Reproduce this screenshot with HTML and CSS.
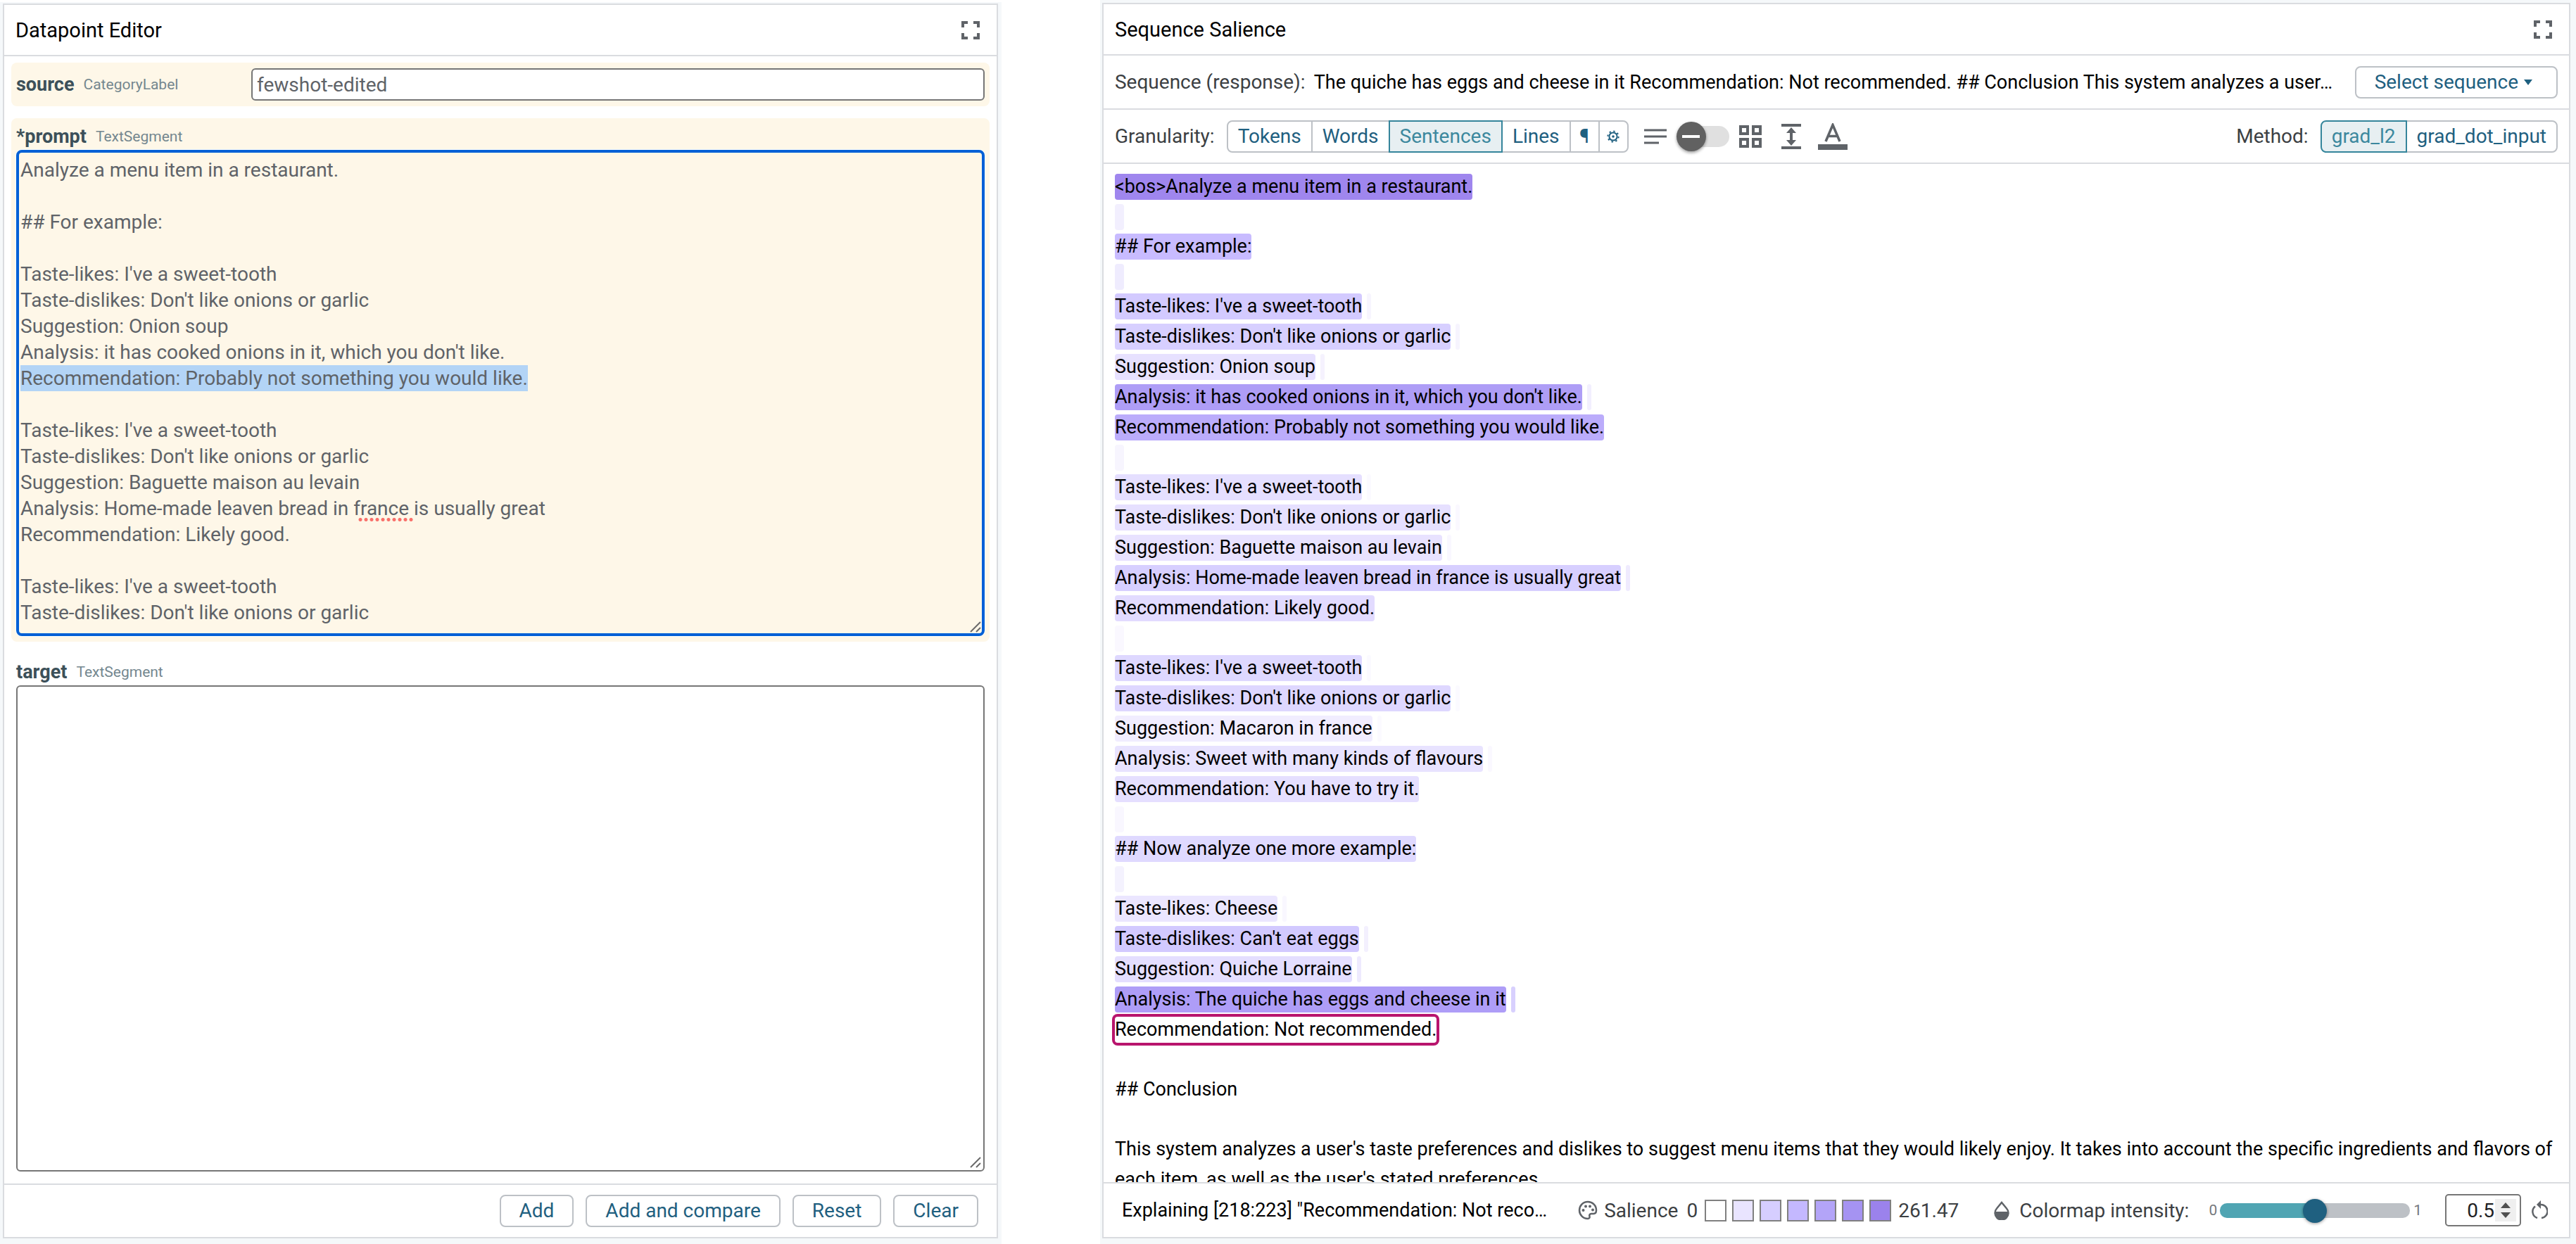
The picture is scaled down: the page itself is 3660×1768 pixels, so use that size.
FILE: index.html
```html
<!DOCTYPE html>
<html lang="en">
<head>
<meta charset="utf-8">
<title>Sequence Salience</title>
<link rel="stylesheet" href="styles.css">
</head>
<body>
<main class="workspace">
  <section class="module module-editor">
    <div class="panel">
      <header class="panel-header">
        <h2 class="panel-title">Datapoint Editor</h2>
        <button class="icon-button" type="button" aria-label="Full screen">
          <svg class="icon-full" viewBox="0 0 26 26"><path d="M2 9V2h7M17 2h7v7M24 17v7h-7M9 24H2v-7" fill="none" stroke="#5f6368" stroke-width="4"/></svg>
        </button>
      </header>
      <div class="editor-body">
        <div class="entry entry-inline edited">
          <label class="field-label" for="source"><b class="field-name">source</b><span class="field-type">CategoryLabel</span></label>
          <input class="text-input" id="source" type="text" value="fewshot-edited">
        </div>
        <div class="entry entry-tall edited">
          <label class="field-label" for="prompt"><b class="field-name">*prompt</b><span class="field-type">TextSegment</span></label>
          <div class="area-wrap">
            <textarea class="text-area text-area-active" id="prompt" spellcheck="false">Analyze a menu item in a restaurant.

## For example:

Taste-likes: I've a sweet-tooth
Taste-dislikes: Don't like onions or garlic
Suggestion: Onion soup
Analysis: it has cooked onions in it, which you don't like.
Recommendation: Probably not something you would like.

Taste-likes: I've a sweet-tooth
Taste-dislikes: Don't like onions or garlic
Suggestion: Baguette maison au levain
Analysis: Home-made leaven bread in france is usually great
Recommendation: Likely good.

Taste-likes: I've a sweet-tooth
Taste-dislikes: Don't like onions or garlic</textarea>
            <span class="spelling-mark"></span>
            <svg class="grip" viewBox="0 0 18 18"><path d="M2 16L16 2M10 16l6-6" stroke="#6b6b6b" stroke-width="2" fill="none"/></svg>
          </div>
        </div>
        <div class="entry entry-tall">
          <label class="field-label" for="target"><b class="field-name">target</b><span class="field-type">TextSegment</span></label>
          <div class="area-wrap">
            <textarea class="text-area" id="target"></textarea>
            <svg class="grip" viewBox="0 0 18 18"><path d="M2 16L16 2M10 16l6-6" stroke="#6b6b6b" stroke-width="2" fill="none"/></svg>
          </div>
        </div>
      </div>
      <footer class="editor-footer">
        <button class="button" type="button">Add</button>
        <button class="button" type="button">Add and compare</button>
        <button class="button" type="button">Reset</button>
        <button class="button" type="button">Clear</button>
      </footer>
    </div>
  </section>

  <section class="module module-salience">
    <div class="panel">
      <header class="panel-header">
        <h2 class="panel-title">Sequence Salience</h2>
        <button class="icon-button" type="button" aria-label="Full screen">
          <svg class="icon-full" viewBox="0 0 26 26"><path d="M2 9V2h7M17 2h7v7M24 17v7h-7M9 24H2v-7" fill="none" stroke="#5f6368" stroke-width="4"/></svg>
        </button>
      </header>
      <div class="bar">
        <span class="bar-label">Sequence (response):</span>
        <span class="sequence-text">The quiche has eggs and cheese in it Recommendation: Not recommended. ## Conclusion This system analyzes a user…</span>
        <button class="button button-menu" type="button">Select sequence<svg class="icon-caret" viewBox="0 0 12 8"><path d="M0 0h12L6 8z" fill="#1f6080"/></svg></button>
      </div>
      <div class="bar">
        <span class="bar-label">Granularity:</span>
        <div class="button-group" role="group" aria-label="Granularity">
          <button class="segment" type="button">Tokens</button>
          <button class="segment" type="button">Words</button>
          <button class="segment segment-on" type="button" aria-pressed="true">Sentences</button>
          <button class="segment" type="button">Lines</button>
          <button class="segment segment-icon" type="button">¶</button>
          <button class="segment segment-icon" type="button" aria-label="Settings"><svg class="icon-gear" viewBox="0 0 18 18"><circle cx="9" cy="9" r="5.6" fill="none" stroke="#1f6080" stroke-width="2"/><circle cx="9" cy="9" r="7.6" fill="none" stroke="#1f6080" stroke-width="2" stroke-dasharray="2.4 3.57"/><circle cx="9" cy="9" r="1.8" fill="#1f6080"/></svg></button>
        </div>
        <div class="density">
          <svg class="icon-notes" viewBox="0 0 32 24"><path d="M0 3h32M0 12h32M0 21h21" stroke="#5f6368" stroke-width="3"/></svg>
          <input class="switch" type="checkbox" role="switch" aria-label="Density">
          <svg class="icon-grid" viewBox="0 0 32 32"><path d="M2 2h10v10H2zM20 2h10v10H20zM2 20h10v10H2zM20 20h10v10H20z" fill="none" stroke="#5f6368" stroke-width="4"/></svg>
          <svg class="icon-spacing" viewBox="0 0 28 36"><path d="M0 2h28M0 34h28" stroke="#5f6368" stroke-width="4"/><path d="M14 8v20" stroke="#5f6368" stroke-width="4"/><path d="M14 5l7 8H7zM14 31l7-8H7z" fill="#5f6368"/></svg>
          <svg class="icon-color" viewBox="0 0 42 38"><path d="M0 34h42" stroke="#5f6368" stroke-width="8"/><path d="M11 26L21 2.500l10 23.500M14.500 18.500h13" fill="none" stroke="#5f6368" stroke-width="3.500"/></svg>
        </div>
        <span class="bar-label method-label">Method:</span>
        <div class="button-group" role="group" aria-label="Method">
          <button class="segment segment-on" type="button" aria-pressed="true">grad_l2</button>
          <button class="segment" type="button">grad_dot_input</button>
        </div>
      </div>
      <div class="tokens">
        <div class="line"><span class="seg" style="background:#9f86ee">&lt;bos&gt;Analyze a menu item in a restaurant.</span></div>
        <div class="line blank"><span class="nl" style="background:#f2effe"></span></div>
        <div class="line"><span class="seg" style="background:#c8bbff">## For example:</span></div>
        <div class="line blank"><span class="nl" style="background:#efecfe"></span></div>
        <div class="line"><span class="seg" style="background:#d3caff">Taste-likes: I've a sweet-tooth</span><span class="end" style="background:#f7f5fe"></span></div>
        <div class="line"><span class="seg" style="background:#d7cfff">Taste-dislikes: Don't like onions or garlic</span><span class="end" style="background:#f6f4fe"></span></div>
        <div class="line"><span class="seg" style="background:#e7e1ff">Suggestion: Onion soup</span><span class="end" style="background:#f5f2fe"></span></div>
        <div class="line"><span class="seg" style="background:#ae9df6">Analysis: it has cooked onions in it, which you don't like.</span><span class="end" style="background:#f2effe"></span></div>
        <div class="line"><span class="seg" style="background:#bbacfb">Recommendation: Probably not something you would like.</span></div>
        <div class="line blank"><span class="nl" style="background:#f7f5fe"></span></div>
        <div class="line"><span class="seg" style="background:#e5dfff">Taste-likes: I've a sweet-tooth</span><span class="end" style="background:#fbfaff"></span></div>
        <div class="line"><span class="seg" style="background:#e6e0ff">Taste-dislikes: Don't like onions or garlic</span><span class="end" style="background:#faf8ff"></span></div>
        <div class="line"><span class="seg" style="background:#e8e2ff">Suggestion: Baguette maison au levain</span><span class="end" style="background:#f9f7ff"></span></div>
        <div class="line"><span class="seg" style="background:#d7cfff">Analysis: Home-made leaven bread in france is usually great</span><span class="end" style="background:#efebfe"></span></div>
        <div class="line"><span class="seg" style="background:#e2dbff">Recommendation: Likely good.</span></div>
        <div class="line blank"><span class="nl" style="background:#faf8ff"></span></div>
        <div class="line"><span class="seg" style="background:#ded8ff">Taste-likes: I've a sweet-tooth</span><span class="end" style="background:#fbfaff"></span></div>
        <div class="line"><span class="seg" style="background:#ded7ff">Taste-dislikes: Don't like onions or garlic</span><span class="end" style="background:#fbfaff"></span></div>
        <div class="line"><span class="seg" style="background:#f1edff">Suggestion: Macaron in france</span><span class="end" style="background:#fbfaff"></span></div>
        <div class="line"><span class="seg" style="background:#e8e3ff">Analysis: Sweet with many kinds of flavours</span><span class="end" style="background:#faf8ff"></span></div>
        <div class="line"><span class="seg" style="background:#e5dfff">Recommendation: You have to try it.</span></div>
        <div class="line blank"><span class="nl" style="background:#f9f7ff"></span></div>
        <div class="line"><span class="seg" style="background:#dfd9ff">## Now analyze one more example:</span></div>
        <div class="line blank"><span class="nl" style="background:#f4f2fe"></span></div>
        <div class="line"><span class="seg" style="background:#ebe6ff">Taste-likes: Cheese</span><span class="end" style="background:#f9f7ff"></span></div>
        <div class="line"><span class="seg" style="background:#d2c9ff">Taste-dislikes: Can't eat eggs</span><span class="end" style="background:#f3f0fe"></span></div>
        <div class="line"><span class="seg" style="background:#e4deff">Suggestion: Quiche Lorraine</span><span class="end" style="background:#eeeafe"></span></div>
        <div class="line"><span class="seg" style="background:#ae9df7">Analysis: The quiche has eggs and cheese in it</span><span class="end" style="background:#d8d0fe"></span></div>
        <div class="line"><span class="seg seg-target">Recommendation: Not recommended.</span></div>
        <div class="line blank"></div>
        <div class="line"><span class="seg">## Conclusion</span></div>
        <div class="line blank"></div>
        <p class="paragraph">This system analyzes a user's taste preferences and dislikes to suggest menu items that they would likely enjoy. It takes into account the specific ingredients and flavors of each item, as well as the user's stated preferences.</p>
      </div>
      <footer class="salience-footer">
        <span class="explaining">Explaining [218:223] "Recommendation: Not reco…</span>
        <div class="legend">
          <svg class="icon-palette" viewBox="0 0 28 28"><path d="M14 2C7 2 2 7.500 2 14s5 12 12 12c2 0 3-1.500 2.500-3-.8-2 .2-4 2.500-4h3c2.500 0 4-2 4-5C26 7 20.500 2 14 2z" fill="none" stroke="#5f6368" stroke-width="2.500"/><circle cx="7.500" cy="14" r="2" fill="#5f6368"/><circle cx="11" cy="8.500" r="2" fill="#5f6368"/><circle cx="17" cy="8.500" r="2" fill="#5f6368"/><circle cx="21" cy="13.500" r="2" fill="#5f6368"/></svg>
          <span class="legend-title">Salience</span>
          <span class="legend-min">0</span>
          <div class="swatches">
            <span class="swatch" style="background:#ffffff"></span>
            <span class="swatch" style="background:#e9e4ff"></span>
            <span class="swatch" style="background:#d6ceff"></span>
            <span class="swatch" style="background:#c4b8ff"></span>
            <span class="swatch" style="background:#b3a4f8"></span>
            <span class="swatch" style="background:#a593f2"></span>
            <span class="swatch" style="background:#9b82ec"></span>
          </div>
          <span class="legend-max">261.47</span>
        </div>
        <div class="intensity">
          <svg class="icon-drop" viewBox="0 0 24 28"><path d="M12 3l7 8.500a9.500 9.500 0 1 1-14 0z" fill="none" stroke="#5f6368" stroke-width="2.500"/><path d="M2 16h20a10 10 0 0 1-20 1z" fill="#5f6368"/></svg>
          <label class="intensity-label" for="slider">Colormap intensity:</label>
          <span class="tick">0</span>
          <input class="slider" id="slider" type="range" min="0" max="1" step="0.1" value="0.5">
          <span class="tick">1</span>
          <div class="number-wrap">
            <input class="number" type="number" min="0" max="1" step="0.1" value="0.5" aria-label="Colormap intensity value">
            <svg class="spinner" viewBox="0 0 30 32"><path d="M0 0h30v32H0z" fill="#efefef"/><path d="M15 5l7 8H8zM15 27l7-8H8z" fill="#505050"/></svg>
          </div>
          <button class="icon-button" type="button" aria-label="Reset intensity"><svg class="icon-reset" viewBox="0 0 24 28"><path d="M6 8.500A9.500 9.500 0 0 0 9 25M13 6a9.500 9.500 0 0 1 2 19" fill="none" stroke="#5f6368" stroke-width="2.500"/><path d="M14 0v12L8 6z" fill="#5f6368"/></svg></button>
        </div>
      </footer>
    </div>
  </section>
</main>
<script src="editor.js"></script>
</body>
</html>
```
FILE: styles.css
```css
* { box-sizing: border-box; }

body {
  margin: 0;
  font-family: Roboto, "Liberation Sans", sans-serif;
  font-size: 27px;
  color: #000;
  background: #fff;
}

button, input, textarea { font: inherit; margin: 0; }

svg { display: block; flex: none; }

.workspace {
  display: grid;
  grid-template-columns: 19fr 28fr;
  gap: 140px;
  height: 100vh;
}

.module { display: flex; min-height: 0; min-width: 0; background: #f5f8fa; }
.module-editor { margin-top: 3px; padding: 2px 5px 8px 4px; }
.module-salience { padding: 4px 8px 8px 3px; }

.panel {
  flex: 1;
  min-width: 0;
  display: flex;
  flex-direction: column;
  border: 2px solid #dadce0;
  background: #fff;
}

.panel-header {
  display: flex;
  align-items: center;
  justify-content: space-between;
  height: 73px;
  padding: 0 24px 0 16px;
  border-bottom: 2px solid #dadce0;
}

.panel-title { margin: 0; font-size: 29px; font-weight: 400; line-height: 36px; }

.icon-button { display: flex; padding: 0; border: 0; background: none; }
.icon-full { width: 26px; height: 26px; }

/* Datapoint editor */
.editor-body {
  flex: 1;
  min-height: 0;
  display: flex;
  flex-direction: column;
  gap: 17px;
  padding: 9px 10px;
}

.entry { padding: 8px 7px; border-radius: 8px; }
.edited { background: #fef7e8; }
.entry-inline { display: flex; align-items: center; }
.entry-inline .field-label { width: 334px; }
.entry-tall { flex: 1; min-height: 0; display: flex; flex-direction: column; }

.field-label { display: flex; align-items: center; gap: 13px; line-height: 37px; }
.field-name { font-weight: 700; color: #3c5059; }
.field-type { font-size: 21px; color: #74878f; }

.text-input {
  flex: 1;
  min-width: 0;
  height: 46px;
  padding: 0 6px;
  border: 2px solid #767676;
  border-radius: 6px;
  background: #fff;
  color: #5f6368;
  font-size: 28px;
}

.area-wrap { position: relative; flex: 1; min-height: 0; display: flex; }

.text-area {
  flex: 1;
  padding: 4px;
  border: 2px solid #767676;
  border-radius: 6px;
  background: transparent;
  color: #5f6368;
  font-size: 28px;
  line-height: 37px;
  resize: none;
  overflow: hidden;
  outline: none;
}

.text-area-active {
  padding: 6px 2px;
  border: 4px solid #0060d6;
  border-radius: 8px;
  box-shadow: 0 0 0 1px #fff;
}

.text-area::selection { background: #b3d4f6; color: #5f6368; }

/* Dotted line under the misspelt word in the prompt */
.spelling-mark {
  position: absolute;
  left: 485px;
  top: 523px;
  width: 80px;
  height: 5px;
  background: radial-gradient(circle, #f9706a 2px, transparent 3px) 0 0 / 8px 5px;
}

.grip { position: absolute; right: 4px; bottom: 4px; width: 18px; height: 18px; }

.editor-footer {
  display: flex;
  align-items: center;
  justify-content: flex-end;
  gap: 17px;
  height: 76px;
  padding: 0 26px;
  border-top: 2px solid #dadce0;
}

.button {
  height: 46px;
  padding: 0 26px;
  border: 2px solid #bdc1c6;
  border-radius: 8px;
  background: #fff;
  color: #1f6080;
  font-size: 28px;
  line-height: 40px;
  white-space: nowrap;
}

.button-menu { display: flex; align-items: center; gap: 8px; padding: 0 34px 0 26px; }
.icon-caret { width: 12px; height: 8px; }

/* Sequence salience */
.bar {
  display: flex;
  align-items: center;
  height: 77px;
  padding: 0 16px;
  border-bottom: 2px solid #dadce0;
}

.bar-label { font-size: 28px; color: #3c4043; white-space: nowrap; }
.sequence-text { flex: 1; margin-left: 12px; white-space: nowrap; }

.button-group { display: flex; margin-left: 17px; }

.segment {
  height: 46px;
  margin-left: -2px;
  padding: 0 14px;
  border: 2px solid #bdc1c6;
  background: #fff;
  color: #1f6080;
  font-size: 28px;
  line-height: 40px;
}

.segment:first-child { margin-left: 0; border-radius: 8px 0 0 8px; }
.segment:last-child { border-radius: 0 8px 8px 0; }
.segment-on { position: relative; border-color: #35859b; background: #e7eff2; color: #3c889e; }
.segment-icon { display: flex; align-items: center; justify-content: center; width: 43px; padding: 0; }
.icon-gear { width: 18px; height: 18px; }

.density { display: flex; align-items: center; gap: 14px; margin-left: 22px; }
.icon-notes { width: 32px; height: 24px; }
.icon-grid { width: 32px; height: 32px; margin-right: 14px; }
.icon-spacing { width: 28px; height: 36px; margin-right: 10px; }
.icon-color { width: 42px; height: 38px; }

.switch {
  position: relative;
  width: 75px;
  height: 42px;
  appearance: none;
}

.switch::before {
  content: "";
  position: absolute;
  inset: 6px 0 6px 10px;
  border-radius: 15px;
  background: #e0e0e0;
}

.switch::after {
  content: "";
  position: absolute;
  left: 0;
  top: 0;
  width: 42px;
  height: 42px;
  border-radius: 50%;
  background: linear-gradient(#fff, #fff) center / 25px 4px no-repeat #616161;
  box-shadow: 0 2px 4px rgba(0, 0, 0, 0.4);
}

.method-label { margin-left: auto; }

.tokens { flex: 1; min-height: 0; overflow: hidden; padding: 11px 0 0 16px; }
.line { display: flex; align-items: center; height: 43px; white-space: nowrap; }
.blank { height: 42px; }
.seg { height: 37px; border-radius: 4px; line-height: 37px; }
.seg-target { box-shadow: 0 0 0 4px #b8146d; }
.nl { width: 13px; height: 37px; border-radius: 4px; }
.end { width: 6px; height: 37px; margin-left: 7px; border-radius: 3px; }
.paragraph { margin: 0; line-height: 43px; }

.salience-footer {
  display: flex;
  align-items: center;
  height: 78px;
  padding: 0 30px 0 26px;
  border-top: 2px solid #dadce0;
}

.explaining { flex: 1; white-space: nowrap; }

.legend, .intensity { display: flex; align-items: center; font-size: 28px; color: #3c4043; }
.icon-palette { width: 28px; height: 28px; }
.legend-title { margin-left: 9px; }
.legend-min { margin-left: 12px; }
.swatches { display: flex; gap: 8px; margin: 0 10px; }
.swatch { width: 31px; height: 31px; border: 2px solid #808080; }

.intensity { margin-left: 49px; }
.icon-drop { width: 24px; height: 28px; }
.intensity-label { margin: 0 28px 0 13px; }
.tick { font-size: 21px; color: #74787c; }

.slider {
  width: 270px;
  height: 34px;
  margin: 0 5px 0 4px;
  appearance: none;
  background: none;
}

.slider::-webkit-slider-runnable-track {
  height: 21px;
  border-radius: 10px;
  background: linear-gradient(90deg, #50a5b3 50%, #bdc1c6 50%);
}

.slider::-webkit-slider-thumb {
  width: 34px;
  height: 34px;
  margin-top: -6px;
  appearance: none;
  border-radius: 50%;
  background: #1f6080;
  box-shadow: 0 1px 4px rgba(0, 0, 0, 0.4);
}

.number-wrap { position: relative; margin: 0 14px 0 33px; }

.number {
  width: 108px;
  height: 46px;
  padding: 0 36px 0 0;
  border: 2px solid #767676;
  border-radius: 5px;
  color: #202124;
  font-size: 28px;
  text-align: right;
  appearance: textfield;
}

.number::-webkit-inner-spin-button { display: none; }
.spinner { position: absolute; right: 7px; top: 7px; width: 30px; height: 32px; }
.icon-reset { width: 24px; height: 28px; }
```
FILE: editor.js
```
const prompt = document.getElementById("prompt");
const phrase = "Recommendation: Probably not something you would like.";
const start = prompt.value.indexOf(phrase);
prompt.focus();
prompt.setSelectionRange(start, start + phrase.length);
prompt.scrollTop = 0;
```
